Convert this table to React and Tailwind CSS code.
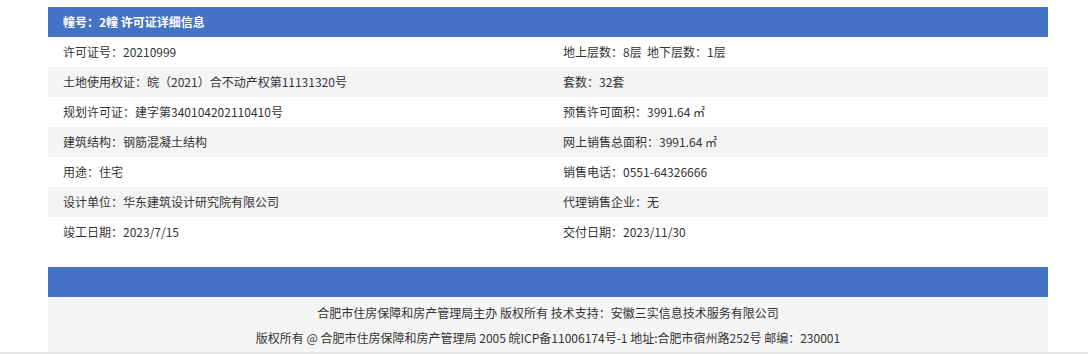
const rows = [
  ['许可证号：20210999', '地上层数：8层  地下层数：1层'],
  ['土地使用权证：皖（2021）合不动产权第11131320号', '套数：32套'],
  ['规划许可证：建字第340104202110410号', '预售许可面积：3991.64 ㎡'],
  ['建筑结构：钢筋混凝土结构', '网上销售总面积：3991.64 ㎡'],
  ['用途：住宅', '销售电话：0551-64326666'],
  ['设计单位：华东建筑设计研究院有限公司', '代理销售企业：无'],
  ['竣工日期：2023/7/15', '交付日期：2023/11/30'],
];

function InfoRow({ left, right, shaded }) {
  return (
    <div className={shaded ? 'flex h-[30px] items-center bg-[#f4f4f4]' : 'flex h-[30px] items-center bg-white'}>
      <div className="w-[500px] pl-[15px] whitespace-pre">{left}</div>
      <div className="w-[500px] pl-[15px] whitespace-pre">{right}</div>
    </div>
  );
}

export default function App() {
  return (
    <div
      className="bg-white pt-[7px] text-[12px] text-[#333]"
      style={{ fontFamily: '"Microsoft YaHei", "Noto Sans CJK SC", "Noto Sans", sans-serif' }}
    >
      <div className="ml-[48px] w-[1000px]">
        {/* header */}
        <div className="flex h-[30px] items-center bg-[#4472c4] pl-[15px] font-bold text-white">
          幢号：2幢 许可证详细信息
        </div>

        {rows.map((r, i) => (
          <InfoRow key={i} left={r[0]} right={r[1]} shaded={i % 2 === 1} />
        ))}

        {/* footer */}
        <div className="mt-[20px] h-[30px] bg-[#4472c4]" />
        <div className="bg-[#f5f5f5] pt-[3px] pb-[2px] text-center leading-[25px] whitespace-pre">
          <p>合肥市住房保障和房产管理局主办 版权所有 技术支持：安徽三实信息技术服务有限公司</p>
          <p>版权所有 @ 合肥市住房保障和房产管理局 2005 皖ICP备11006174号-1 地址:合肥市宿州路252号 邮编：230001</p>
        </div>
      </div>
      <div className="h-[2px] bg-[#e6e6e6]" />
    </div>
  );
}
